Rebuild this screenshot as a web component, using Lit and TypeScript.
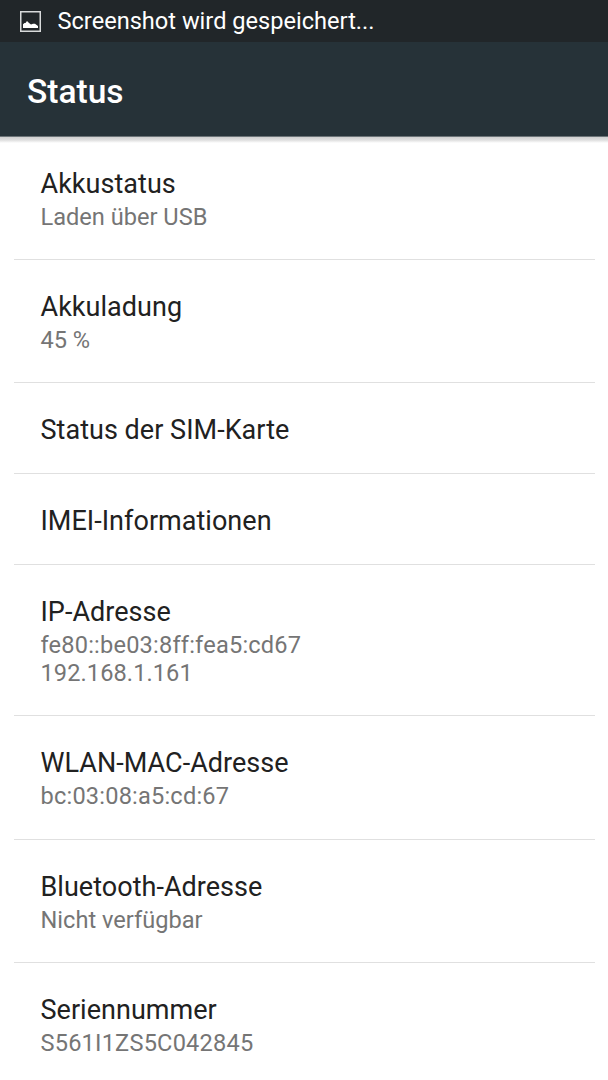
import { LitElement, html, css } from "lit";
import { customElement } from "lit/decorators.js";

interface Entry { title: string; lines: string[]; address?: boolean; }

const entries: Entry[] = [
  { title: "Akkustatus", lines: ["Laden über USB"] },
  { title: "Akkuladung", lines: ["45 %"] },
  { title: "Status der SIM-Karte", lines: [] },
  { title: "IMEI-Informationen", lines: [] },
  { title: "IP-Adresse", lines: ["fe80::be03:8ff:fea5:cd67", "192.168.1.161"], address: true },
  { title: "WLAN-MAC-Adresse", lines: ["bc:03:08:a5:cd:67"], address: true },
  { title: "Bluetooth-Adresse", lines: ["Nicht verfügbar"] },
  { title: "Seriennummer", lines: ["S561I1ZS5C042845"], address: true },
];

@customElement("app-root")
export class AppRoot extends LitElement {
  static styles = css`
    :host { display: flex; flex-direction: column; height: 1080px; overflow: hidden; background: #fff; font-family: Roboto, sans-serif; }
    .statusbar { flex: none; height: 42px; display: flex; align-items: center; background: #212629; color: #fff; font-size: 23.6px; line-height: 42px; }
    .icon { width: 21px; height: 21px; margin: 0 16.500px 0 20px; }
    .appbar { flex: none; height: 94px; box-sizing: border-box; padding: 2px 27px 0; background: #263238; color: #fff; font-size: 33.5px; font-weight: 500; line-height: 95px; }
    .shadow { flex: none; height: 7px; background: linear-gradient(#6b7377 0 1px, #cfcfcf 1px, #dedede 4px, #fff 7px); }
    .list { flex: none; display: flex; flex-direction: column; margin: -6px 13.5px 0; }
    .row { padding: 31px 27px 27.1px; border-bottom: 1px solid #e0e0e0; }
    .title { font-size: 27px; line-height: 32px; color: #212121; letter-spacing: 0.03px; }
    .line { font-size: 23.6px; line-height: 28px; color: #757575; }
    .address .line { letter-spacing: 0.19px; }
    .address .line + .line { letter-spacing: 0.08px; }
    .sub { padding-top: 3px; margin-bottom: 1px; }
  `;
  render() {
    return html`
      <div class="statusbar">
        <svg class="icon" viewBox="0 0 21 21"><rect x="0.75" y="0.75" width="19.500" height="19.500" fill="none" stroke="#d8dadb" stroke-width="1.5"/><path d="M3 17V13.300L4.500 12L5.500 12L7 10L9 12L11 13.500L13 12.800L15 12.700L18 15V17Z" fill="#fff"/></svg>
        <span>Screenshot wird gespeichert...</span>
      </div>
      <div class="appbar">Status</div>
      <div class="shadow"></div>
      <div class="list">
        ${entries.map(e => html`<div class="row ${e.address ? "address" : ""}"><div class="title">${e.title}</div>${e.lines.length ? html`<div class="sub">${e.lines.map(l => html`<div class="line">${l}</div>`)}</div>` : ""}</div>`)}
      </div>`;
  }
}
